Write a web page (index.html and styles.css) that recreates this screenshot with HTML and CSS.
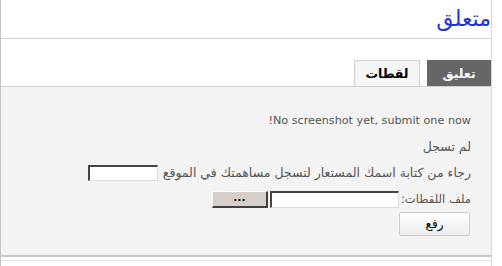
FILE: index.html
```html
<!DOCTYPE html>
<html lang="ar">
<head>
<meta charset="utf-8">
<link rel="stylesheet" href="styles.css">
</head>
<body>
<div class="wrap" dir="rtl">
  <h2 class="title">متعلق</h2>
  <div class="tabs">
    <div class="tab active">تعليق</div>
    <div class="tab">لقطات</div>
  </div>
  <div class="panel">
    <p class="row latin">No screenshot yet, submit one now!</p>
    <p class="row">لم تسجل</p>
    <p class="row">رجاء من كتابة اسمك المستعار لتسجل مساهمتك في الموقع <span class="txt"></span></p>
    <div class="row file">
      <span class="label">ملف اللقطات:</span>
      <span class="fileinput"></span>
      <span class="browse">...</span>
    </div>
    <div class="submitrow"><span class="submit">رفع</span></div>
  </div>
  <div class="footer"></div>
</div>
</body>
</html>
```
FILE: styles.css
```css
html, body {
  margin: 0;
  padding: 0;
  background: #fff;
}
body {
  font-family: "DejaVu Sans", sans-serif;
  font-size: 12.5px;
  color: #555;
  width: 502px;
  height: 266px;
  overflow: hidden;
}
.wrap {
  width: 492px;
  height: 266px;
  border-left: 1px solid #c4c4c4;
  border-right: 1px solid #d8d8d8;
  box-sizing: border-box;
}
.title {
  margin: 0;
  height: 39px;
  box-sizing: border-box;
  border-bottom: 1px solid #cfcfcf;
  padding: 5px 0 0 0;
  font-size: 22px;
  font-weight: normal;
  color: #1a35d0;
  line-height: 28px;
}
.tabs {
  display: flex;
  gap: 7px;
  margin-top: 21px;
  height: 26px;
}
.tab {
  flex: none;
  width: 66px;
  height: 26px;
  box-sizing: border-box;
  background: #f5f5f5;
  border: 1px solid #cfcfcf;
  border-bottom: none;
  color: #000;
  font-weight: bold;
  font-size: 12.5px;
  text-align: center;
  line-height: 25px;
}
.tab.active {
  width: 64px;
  background: #666;
  border-color: #666;
  color: #fff;
}
.panel {
  height: 171px;
  box-sizing: border-box;
  background: #f3f3f3;
  border-top: 1px solid #cfcfcf;
  border-bottom: 2px solid #c8c8c8;
  padding: 21px 20px 0 0;
}
.row {
  margin: 0;
  line-height: 26px;
  height: 26px;
  color: #555;
  text-align: right;
  white-space: nowrap;
}
.latin {
  font-size: 11.2px;
}
.txt {
  display: inline-block;
  vertical-align: middle;
  width: 70px;
  height: 16px;
  box-sizing: border-box;
  background: #fff;
  border-style: solid;
  border-width: 2px 1px 1px 2px;
  border-color: #444 #ddd #ddd #444;
  margin-right: 1px;
  position: relative;
  top: -1px;
}
.file {
  display: flex;
  align-items: center;
}
.label {
  font-size: 11.6px;
}
.fileinput {
  flex: none;
  width: 129px;
  height: 17px;
  box-sizing: border-box;
  background: #fff;
  border-style: solid;
  border-width: 2px 1px 1px 2px;
  border-color: #444 #ddd #ddd #444;
  margin-right: 2px;
}
.browse {
  flex: none;
  width: 56px;
  height: 17px;
  box-sizing: border-box;
  background: #d4d0c8;
  border-style: solid;
  border-width: 1px 2px 2px 1px;
  border-color: #fff #404040 #404040 #fff;
  margin-right: 2px;
  text-align: center;
  line-height: 12px;
  color: #000;
  font-weight: bold;
  font-size: 11px;
}
.submitrow {
  display: flex;
  padding-right: 1px;
}
.submit {
  width: 71px;
  height: 24px;
  box-sizing: border-box;
  border: 1px solid #cdcdcd;
  border-radius: 2px;
  background: linear-gradient(#ffffff, #ececec);
  color: #000;
  text-align: center;
  line-height: 22px;
  font-size: 12px;
}
.footer {
  margin-top: 3px;
  height: 5px;
  border-top: 1px solid #e2e2e2;
}
```
